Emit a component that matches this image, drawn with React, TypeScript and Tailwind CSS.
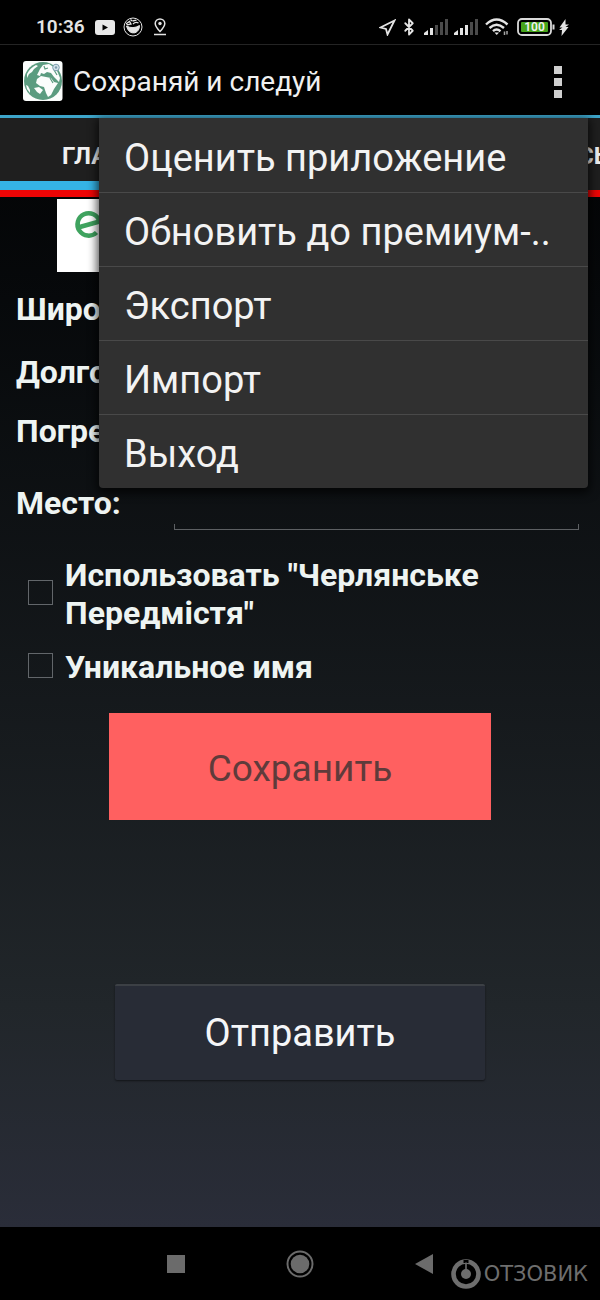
import React from 'react';
import { Bluetooth } from 'lucide-react';

const menuItems = ['Оценить приложение', 'Обновить до премиум-..', 'Экспорт', 'Импорт', 'Выход']

const StatusSignal = ({ level }: { level: number }): React.ReactElement => (
  <svg className="h-4 w-6" viewBox="0 0 24 16" fill="#e4e4e4">
    <path d="M0 16V14L4 11V16Z" />
    {[5, 10, 15, 20].map((x, i) => (
      <rect key={x} x={x + 1} y={9 - i * 3} width="3" height={7 + i * 3} fill={i < level ? '#e4e4e4' : '#4b4b4b'} />
    ))}
  </svg>
)

const StatusBar = (): React.ReactElement => (
  <div className="flex h-[45px] items-center justify-between border-b border-[#242424] bg-black pr-[31px] pl-9 pt-[10px] text-[#e4e4e4]">
    <div className="flex items-center">
      <span className="text-[19px] leading-5 font-semibold">10:36</span>
      <svg className="ml-[10px] h-[15px] w-5" viewBox="0 0 20 15">
        <rect width="20" height="15" rx="3" fill="#e8e8e8" />
        <path d="M7.5 4.5L13 7.5L7.5 10.5Z" fill="#000" />
      </svg>
      <svg className="ml-2 size-5" viewBox="0 0 20 20" fill="none" stroke="#e4e4e4">
        <circle cx="10" cy="10" r="9" />
        <path d="M3.5 9Q10 12.500 16.500 8.500Q16.500 14 12 15.800Q5.500 17 3.500 9Z" fill="#e4e4e4" />
        <path d="M3.500 6.500L6.500 4.500L8 7L4.500 7.800ZM9.500 4L13.500 3.200M10 7Q12.500 4.500 15.500 6M7.500 2.500L9 4" strokeWidth="1.300" />
      </svg>
      <svg className="ml-[11px] h-[18px] w-3" viewBox="0 0 12 18" fill="none" stroke="#e4e4e4" strokeWidth="1.500">
        <path d="M6 13.500Q1.200 8.500 1.200 5.500A4.800 4.600 0 0 1 10.800 5.500Q10.800 8.500 6 13.500Z" />
        <circle cx="6" cy="5.500" r="1.700" fill="#e4e4e4" stroke="none" />
        <path d="M0 16.500H12" />
      </svg>
    </div>
    <div className="flex items-center">
      <svg className="size-[17px]" viewBox="0 0 17 17" fill="none" stroke="#e4e4e4" strokeWidth="1.800">
        <path d="M15.500 1.500L1.500 8.500L7 10L8.500 15.500Z" />
      </svg>
      <Bluetooth className="mr-px ml-1 h-5 w-[18px]" strokeWidth={2.4} />
      <div className="ml-[5px] flex gap-[6px]">
        <StatusSignal level={1} />
        <StatusSignal level={2} />
      </div>
      <svg className="ml-[7px] h-[18px] w-6" viewBox="0 0 24 18" fill="none" stroke="#e4e4e4" strokeWidth="2.400">
        <path d="M1 6.500Q11.500 -3.500 22.500 6.500M4.500 10Q11.500 3.500 19 10M8 13.200Q11.500 10 15.500 13.200" />
        <path d="M9.500 14.500H14L11.700 17Z" fill="#e4e4e4" stroke="none" />
        <path d="M19.500 17V13.500M22 13V16.500" strokeWidth="1.500" stroke="#a5a5a5" />
      </svg>
      <svg className="ml-2 h-[18px] w-[38px]" viewBox="0 0 38 18">
        <rect x="1" y="1" width="33" height="16" rx="4" fill="none" stroke="#dadada" strokeWidth="1.800" />
        <rect x="4" y="4" width="27" height="10" rx="1" fill="#46a51b" />
        <path d="M36.500 6.500V11.500" stroke="#dadada" strokeWidth="2" />
        <text x="17.500" y="13.200" textAnchor="middle" fontSize="12" fontWeight="600" fill="#f2f2f2">100</text>
      </svg>
      <svg className="ml-1 h-[17px] w-[10px]" viewBox="0 0 10 17" fill="#e4e4e4">
        <path d="M6.500 0L0.500 8.500H3.500L0 11H3L2.500 17L9.500 8H6.500L10 5.500H6.500Z" />
      </svg>
    </div>
  </div>
)

const GlobeIcon = (): React.ReactElement => (
  <svg className="size-10" viewBox="0 0 40 40">
    <rect width="39.500" height="40" rx="3" fill="#fbfdfc" />
    <circle cx="20" cy="20" r="19" fill="#5b9c80" />
    <path
      d="M4 13Q7 7 13 4L15 5L11 8L9 11L6 13L4 17Z
        M3 24L5 25L7 29L7 32L4 28Z
        M17 8L20 4L26 3L29 5L33 8L35 12L37 17L36 21L33 18L31 16L28 12L24 11L21 13L18 12L17 15L14 14Z
        M14 18L18 15L23 16L28 17L31 21L35 22L31 28L28 34L25 36L23 32L21 26L17 25L13 22Z
        M11 27L16 26L20 29L17 33L14 31Z"
      fill="#fbfdfc"
    />
    <path d="M21 5L22 8L25 7M27 17L30 22M31 9L34 14" fill="none" stroke="#5b9c80" strokeWidth="1.200" />
    <circle cx="33" cy="6.500" r="3.300" fill="#d4e3ea" stroke="#7d9dae" />
    <circle cx="33" cy="6.500" r="1.200" fill="#7d9dae" />
  </svg>
)

const TitleBar = (): React.ReactElement => (
  <header className="flex h-[73px] items-center border-b-[3px] border-[#3da5ca] bg-black pt-[2px] pr-[38px] pl-[23px]">
    <GlobeIcon />
    <h1 className="ml-[10px] flex-1 pt-px text-[28px] leading-8 text-[#f0f0f0]">Сохраняй и следуй</h1>
    <button type="button" aria-label="Меню" className="flex flex-col items-center gap-1 pt-[2px] pl-4">
      <span className="size-2 bg-[#cfcfcf]" />
      <span className="size-2 bg-[#cfcfcf]" />
      <span className="size-2 bg-[#cfcfcf]" />
    </button>
  </header>
)

const Tabs = (): React.ReactElement => (
  <nav className="flex justify-between overflow-hidden border-b-[7px] border-[#ee0505] bg-[#1f1f1f] text-[24px] leading-8 font-bold text-[#f0f0f0]">
    <button type="button" className="h-[72px] w-[248px] border-b-[9px] border-[#35b3e5] pt-3 pl-[62px] text-left">
      ГЛА
    </button>
    <button type="button" className="h-[72px] w-[22px] border-b-[9px] border-transparent pt-3 text-left">
      СЬ
    </button>
  </nav>
)

const Menu = (): React.ReactElement => (
  <ul className="absolute top-0 right-3 left-[99px] rounded-b-sm bg-[#303030] pt-px shadow-[0_3px_10px_2px_rgba(0,0,0,0.7)]">
    {menuItems.map(item => (
      <li key={item} className="border-b border-[#494949] last:border-b-0">
        <button type="button" className="block h-[73px] w-full truncate pt-1 pl-[25px] text-left text-[38px] leading-[46px] text-[#f3f3f3]">
          {item}
        </button>
      </li>
    ))}
  </ul>
)

const CheckRow = ({ id, children }: { id: string, children: React.ReactNode }): React.ReactElement => (
  <div className="flex items-center pl-3">
    <input
      id={id}
      type="checkbox"
      className="mb-1 size-[25px] shrink-0 appearance-none border border-[#62666a] checked:bg-[#35b3e5]"
    />
    <label htmlFor={id} className="ml-3 max-w-[440px]">{children}</label>
  </div>
)

const SaveForm = (): React.ReactElement => (
  <form className="px-4 text-[32px] leading-[38px] font-bold text-[#eef4f2]">
    <p className="mt-[18px]">Широ</p>
    <p className="mt-[25px]">Долго</p>
    <p className="mt-[21px]">Погре</p>
    <div className="mt-[26px] flex items-center pr-[5px]">
      <label htmlFor="place" className="w-[158px]">Место:</label>
      <div className="flex-1">
        <input id="place" type="text" className="block h-12 w-full bg-transparent px-2 font-normal outline-none" />
        <div className="h-[6px] border border-t-0 border-[#5d6063]" />
      </div>
    </div>
    <div className="mt-[26px] flex flex-col gap-4">
      <CheckRow id="use-nearby">Использовать "Черлянське Передмістя"</CheckRow>
      <CheckRow id="unique-name">Уникальное имя</CheckRow>
    </div>
    <div className="mt-[27px] px-[93px]">
      <button type="button" className="h-[107px] w-full bg-[#ff6060] pt-1 text-[37px] font-normal text-[#5f3b3b]">
        Сохранить
      </button>
    </div>
    <div className="mt-[164px] px-[99px]">
      <button
        type="button"
        className="h-24 w-full rounded-xs border-t-2 border-[#3c4045] bg-[#282c36] text-[38px] font-normal text-[#f5f6f8] shadow-[0_1px_2px_rgba(0,0,0,0.5)]"
      >
        Отправить
      </button>
    </div>
  </form>
)

const SystemNav = (): React.ReactElement => (
  <footer className="relative flex h-[73px] items-center justify-center bg-black">
    <button type="button" aria-label="Недавние" className="flex w-[124px] justify-center">
      <span className="size-[18px] bg-[#6b6b6b]" />
    </button>
    <button type="button" aria-label="Домой" className="flex w-[124px] justify-center">
      <svg className="size-7" viewBox="0 0 28 28">
        <circle cx="14" cy="14" r="12.500" fill="none" stroke="#6b6b6b" strokeWidth="2" />
        <circle cx="14" cy="14" r="9.300" fill="#6b6b6b" />
      </svg>
    </button>
    <button type="button" aria-label="Назад" className="flex w-[124px] justify-center">
      <svg className="h-5 w-[18px]" viewBox="0 0 18 20" fill="#6b6b6b">
        <path d="M0 10L18 0V20Z" />
      </svg>
    </button>
    <div className="absolute right-3 bottom-[11px] flex items-center gap-[3px] text-[#6e6e6e]">
      <svg className="size-[30px]" viewBox="0 0 30 30" fill="currentColor">
        <circle cx="15" cy="15" r="12.500" fill="none" stroke="currentColor" strokeWidth="4.600" />
        <rect x="12.500" y="1" width="5" height="3" fill="#000" />
        <circle cx="15" cy="15" r="5" />
        <path d="M14.200 3.500H15.800V11H14.200Z" />
      </svg>
      <span className="font-['DejaVu_Sans',sans-serif] text-[21px] leading-[30px]">ОТЗОВИК</span>
    </div>
  </footer>
)

const App = (): React.ReactElement => (
  <div className="flex min-h-screen flex-col bg-black font-[Roboto,sans-serif]">
    <StatusBar />
    <TitleBar />
    <main className="relative flex-1 bg-linear-to-b from-[#030405] via-[#21262a] via-80% to-[#2a2d39]">
      <Tabs />
      <div className="mx-[57px] mt-[2px] h-[73px] bg-white pt-[2px] pl-[17px]">
        <svg className="size-10" viewBox="0 0 40 40" fill="none" stroke="#3fa35f" strokeWidth="4.500">
          <path d="M4 26.500L25.500 20.500A11.200 11.200 0 1 0 22.500 31.500" strokeLinejoin="round" />
        </svg>
      </div>
      <SaveForm />
      <Menu />
    </main>
    <SystemNav />
  </div>
)

export default App;
